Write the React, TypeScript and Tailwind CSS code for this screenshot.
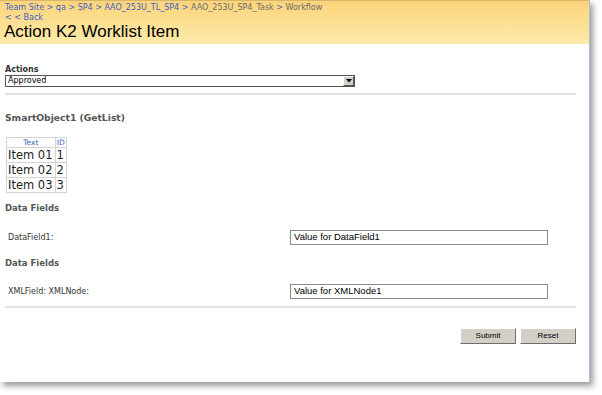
import React from "react";

const crumbs = [
  { label: "Team Site", link: true },
  { label: "qa", link: true },
  { label: "SP4", link: true },
  { label: "AAO_253U_TL_SP4", link: true },
  { label: "AAO_253U_SP4_Task", link: false },
  { label: "Workflow", link: false },
];

const rows = [
  { text: "Item 01", id: "1" },
  { text: "Item 02", id: "2" },
  { text: "Item 03", id: "3" },
];

const FieldRow: React.FC<{ label: string; value: string }> = ({ label, value }) => (
  <div className="flex items-center h-[15px]">
    <span className="w-[285px] pl-[3px] text-[8px] text-[#333]">{label}</span>
    <div className="w-[258px] h-[15px] border border-[#8a8a8a] bg-white pl-[3px] flex items-center font-['Liberation_Sans',Arial,sans-serif] text-[9.5px] text-black">
      {value}
    </div>
  </div>
);

const Btn: React.FC<{ label: string }> = ({ label }) => (
  <button className="w-[56px] h-[16px] bg-[#d4d0c8] border border-t-white border-l-white border-b-[#6d6d6d] border-r-[#6d6d6d] text-[8px] text-black font-['Liberation_Sans',Arial,sans-serif]">
    {label}
  </button>
);

export default function App() {
  return (
    <div className="w-[602px] h-[395px] bg-white font-['DejaVu_Sans',Verdana,sans-serif]">
      <div className="w-[590px] h-[382px] bg-white border-r border-r-[#a9bfdc] shadow-[3px_4px_6px_rgba(0,0,0,0.4)] flex flex-col">
        <div className="h-[44px] border-t border-t-[#d8b66a] bg-gradient-to-b from-[#fdd47a] to-[#fdeaaa] px-[4px] pt-[2px]">
          <div className="text-[8px] leading-[10px] text-[#777] pl-[1px]">
            {crumbs.map((c, i) => (
              <span key={i}>
                <span className={c.link ? "text-[#3d5fc4]" : "text-[#6b6b6b]"}>{c.label}</span>
                {i < crumbs.length - 1 && <span className="text-[#3d5fc4]"> &gt; </span>}
              </span>
            ))}
          </div>
          <div className="text-[8px] leading-[9px] text-[#3d5fc4] pl-[1px]">&lt; &lt; Back</div>
          <div className="font-['Liberation_Sans',Arial,sans-serif] text-[17px] leading-[20px] text-black">
            Action K2 Worklist Item
          </div>
        </div>

        <div className="pl-[5px] pr-[13px] flex flex-col">
          <div className="mt-[21px] text-[8px] leading-[10px] font-bold text-[#333]">Actions</div>
          <div className="w-[350px] h-[12px] border border-[#555] bg-white flex items-center justify-between">
            <span className="pl-[2px] text-[8px] text-black">Approved</span>
            <span className="w-[11px] h-[10px] bg-[#d4d0c8] border border-t-white border-l-white border-b-[#555] border-r-[#555] flex items-center justify-center">
              <svg width="6" height="4" viewBox="0 0 6 4">
                <path d="M0 0h6L3 3.5z" fill="#000" />
              </svg>
            </span>
          </div>
          <div className="mt-[6px] h-0 border-t-2 border-t-[#e2e2e2]" />

          <div className="mt-[17px] text-[9.2px] leading-[12px] font-bold text-[#555]">
            SmartObject1 (GetList)
          </div>

          <table className="mt-[13px] ml-[1px] border-collapse border border-[#b9b9b9] w-[61px]">
            <thead>
              <tr>
                <th className="border border-[#d3d3d3] text-[7.5px] leading-[9px] font-normal text-[#3d5fc4] px-[1px]">Text</th>
                <th className="border border-[#d3d3d3] text-[7.5px] leading-[9px] font-normal text-[#3d5fc4] px-[1px]">ID</th>
              </tr>
            </thead>
            <tbody>
              {rows.map((r) => (
                <tr key={r.id}>
                  <td className="border border-[#d3d3d3] text-[11.5px] leading-[14px] text-[#222] pl-[1px] whitespace-nowrap">{r.text}</td>
                  <td className="border border-[#d3d3d3] text-[11.5px] leading-[14px] text-[#222] pl-[1px]">{r.id}</td>
                </tr>
              ))}
            </tbody>
          </table>

          <div className="mt-[9px] text-[8.5px] leading-[12px] font-bold text-[#555]">Data Fields</div>
          <div className="mt-[16px]">
            <FieldRow label="DataField1:" value="Value for DataField1" />
          </div>
          <div className="mt-[12px] text-[8.5px] leading-[12px] font-bold text-[#555]">Data Fields</div>
          <div className="mt-[15px]">
            <FieldRow label="XMLField: XMLNode:" value="Value for XMLNode1" />
          </div>
          <div className="mt-[7px] h-0 border-t-2 border-t-[#e2e2e2]" />

          <div className="mt-[20px] flex justify-end gap-[4px]">
            <Btn label="Submit" />
            <Btn label="Reset" />
          </div>
        </div>
      </div>
    </div>
  );
}
